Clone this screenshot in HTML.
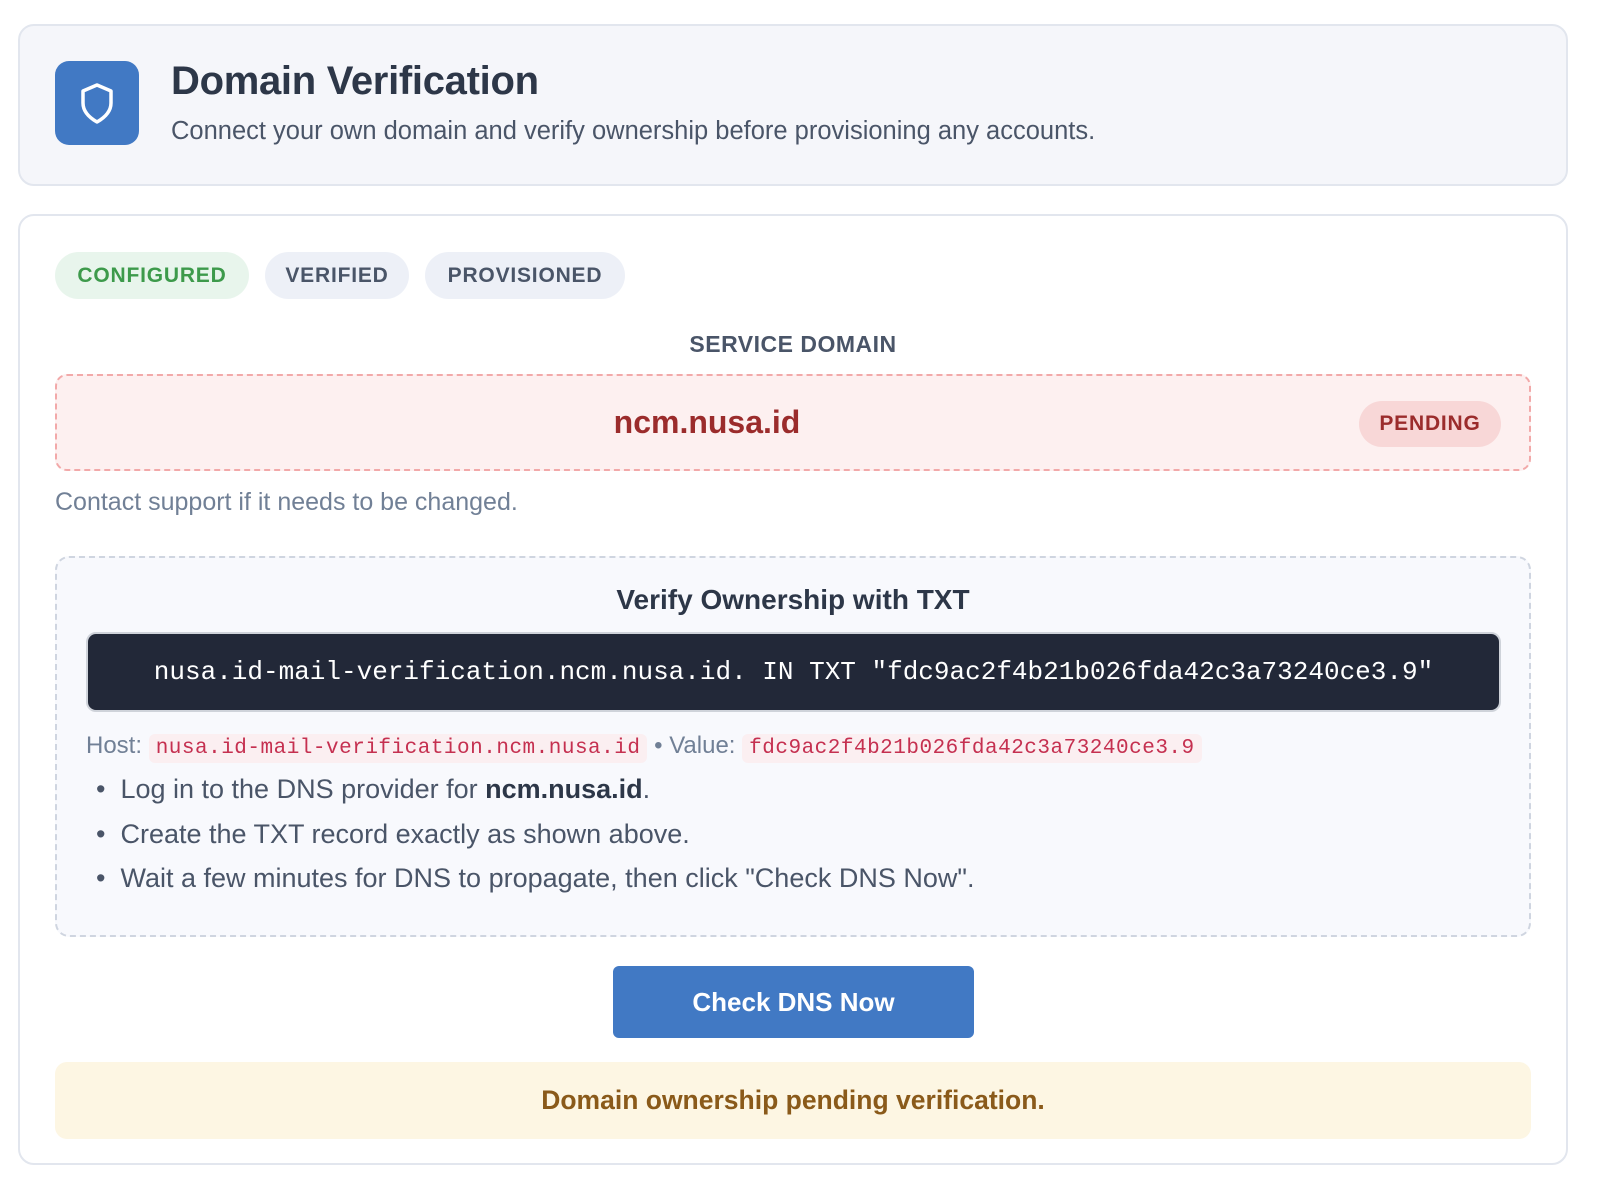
<!DOCTYPE html>
<html><head><meta charset="utf-8"><style>
*{box-sizing:border-box;margin:0;padding:0}
html,body{width:1598px;height:1190px;background:#fff;font-family:"Liberation Sans",sans-serif;overflow:hidden}
.abs{position:absolute}
.card{position:absolute;left:18px;width:1550px;border:2px solid #e2e6ee;border-radius:16px}
.hdr{top:24px;height:162px;background:#f5f6fa}
.main{top:214px;height:951px;background:#fff}
.icon{left:55px;top:61px;width:84px;height:84px;background:#4179c4;border-radius:14px;display:flex;align-items:center;justify-content:center}
.pill{top:252px;height:47px;border-radius:24px;display:flex;align-items:center;justify-content:center;font-size:21px;font-weight:bold;letter-spacing:.8px;color:#4a5568;background:#edf0f7}
.mono{font-family:"Liberation Mono","DejaVu Sans Mono",monospace}
.chip{background:#fbeff1;color:#c53050;border-radius:6px;padding:3px 7px;font-size:21px;letter-spacing:.5px}
</style></head><body>
<div class="card hdr"></div>
<div class="abs icon"><svg width="40" height="44" viewBox="0 0 40 44"><path d="M20 4 L34 10 V22 C34 31 27 37 20 41 C13 37 6 31 6 22 V10 Z" fill="none" stroke="#fff" stroke-width="3.5" stroke-linejoin="round"/></svg></div>
<div class="abs" style="left:171px;top:59px;font-size:40px;font-weight:bold;color:#2d3748;letter-spacing:-.3px">Domain Verification</div>
<div class="abs" style="left:171px;top:117px;font-size:25.5px;color:#4a5568">Connect your own domain and verify ownership before provisioning any accounts.</div>

<div class="card main"></div>
<div class="abs pill" style="left:55px;width:194px;background:#e8f5ec;color:#3d9a4b">CONFIGURED</div>
<div class="abs pill" style="left:265px;width:144px">VERIFIED</div>
<div class="abs pill" style="left:425px;width:200px">PROVISIONED</div>
<div class="abs" style="left:0;width:1586px;top:331px;text-align:center;font-size:23px;font-weight:bold;letter-spacing:.5px;color:#4a5568">SERVICE DOMAIN</div>

<div class="abs" style="left:55px;top:374px;width:1476px;height:97px;background:#fdf0f0;border:2px dashed #f2a9a9;border-radius:12px"></div>
<div class="abs" style="left:57px;width:1300px;top:404px;text-align:center;font-size:32px;font-weight:bold;color:#9b2c2c">ncm.nusa.id</div>
<div class="abs" style="left:1359px;top:401px;width:142px;height:46px;border-radius:23px;background:#f8d7d7;color:#9b2c2c;font-size:21px;font-weight:bold;letter-spacing:.8px;display:flex;align-items:center;justify-content:center">PENDING</div>
<div class="abs" style="left:55px;top:488px;font-size:25px;color:#718096">Contact support if it needs to be changed.</div>

<div class="abs" style="left:55px;top:556px;width:1476px;height:381px;background:#f8f9fd;border:2px dashed #cfd5e0;border-radius:14px"></div>
<div class="abs" style="left:55px;width:1476px;top:584px;text-align:center;font-size:28px;font-weight:bold;color:#2d3748">Verify Ownership with TXT</div>
<div class="abs mono" style="left:86px;top:632px;width:1415px;height:80px;background:#222838;border:2px solid #cfd3da;border-radius:10px;color:#fff;font-size:26px;display:flex;align-items:center;justify-content:center">nusa.id-mail-verification.ncm.nusa.id. IN TXT "fdc9ac2f4b21b026fda42c3a73240ce3.9"</div>
<div class="abs" style="left:86px;top:732px;font-size:24px;color:#718096;white-space:nowrap">Host: <span class="chip mono">nusa.id-mail-verification.ncm.nusa.id</span> • Value: <span class="chip mono">fdc9ac2f4b21b026fda42c3a73240ce3.9</span></div>
<div class="abs" style="left:96px;top:767px;font-size:27px;color:#4a5568;line-height:44.5px">
<div>•&nbsp;&nbsp;Log in to the DNS provider for <b style="color:#2d3748">ncm.nusa.id</b>.</div>
<div>•&nbsp;&nbsp;Create the TXT record exactly as shown above.</div>
<div>•&nbsp;&nbsp;Wait a few minutes for DNS to propagate, then click "Check DNS Now".</div>
</div>

<div class="abs" style="left:613px;top:966px;width:361px;height:72px;background:#4179c4;border-radius:6px;color:#fff;font-size:26px;font-weight:bold;display:flex;align-items:center;justify-content:center">Check DNS Now</div>
<div class="abs" style="left:55px;top:1062px;width:1476px;height:77px;background:#fdf6e3;border-radius:12px;color:#8a5a1a;font-size:26.5px;font-weight:bold;display:flex;align-items:center;justify-content:center">Domain ownership pending verification.</div>
</body></html>
